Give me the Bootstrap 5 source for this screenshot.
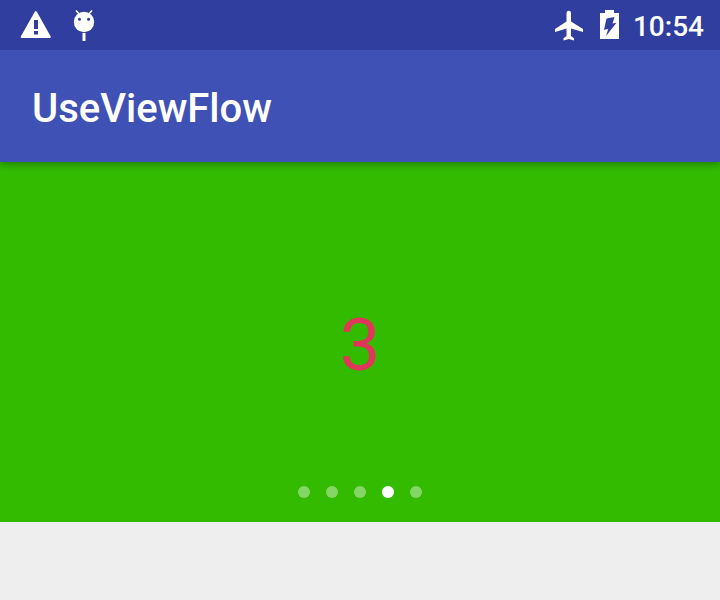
<!DOCTYPE html>
<html lang="en">
<head>
<meta charset="utf-8">
<meta name="viewport" content="width=device-width, initial-scale=1">
<title>UseViewFlow</title>
<link href="https://cdn.jsdelivr.net/npm/bootstrap@5.3.0/dist/css/bootstrap.min.css" rel="stylesheet">
<style>
body{font-family:Roboto,sans-serif;background:#eee;height:600px;overflow:hidden}
.status-bar{height:50px;background:#303f9f;padding:0 16px 0 20px;z-index:2}
.status-bar svg{display:block;fill:#fff}
.clock{font-size:28px;line-height:50px;font-weight:500;padding-top:4px;height:54px;margin-left:12px}
.battery{margin-left:12px}
.app-bar{height:112px;background:#3f51b5;padding:6px 32px 0;box-shadow:0 2px 8px rgba(0,0,0,.35);z-index:1}
.app-title{font-size:40px;font-weight:500;line-height:48px}
.pager{height:360px;background:#33bb00}
.page-number{font-size:72px;line-height:84px;color:#e0365a;padding-top:44px}
.dots{gap:16px;padding-bottom:24px}
.dot{width:12px;height:12px;background:rgba(255,255,255,.4)}
.dot.active{background:#fff}
</style>
</head>
<body>
<header class="status-bar position-relative d-flex align-items-center justify-content-between text-white">
  <div class="d-flex align-items-center">
    <svg width="32" height="50" viewBox="0 0 32 50"><path stroke="#fff" stroke-width="2" stroke-linejoin="round" d="M15.800 12 29.800 37H1.700z"/><path fill="#303f9f" d="M14 20h4v9h-4zM14 31h4v3.500h-4z"/></svg>
    <svg class="ms-3" width="32" height="50" viewBox="0 0 32 50"><circle cx="16" cy="22" r="10.200"/><path d="M14.500 33h3v8h-3z"/><path d="m8 10.500 4 4.500M24 10.500l-4 4.500" stroke="#fff" stroke-width="1.600"/><g fill="#303f9f"><circle cx="11.500" cy="19.300" r="1.500"/><circle cx="20.500" cy="19.300" r="1.500"/></g></svg>
  </div>
  <div class="d-flex align-items-center">
    <svg width="32" height="50" viewBox="0 0 32 50"><path d="M30 32v-3l-12-7.500v-8.500a2.200 2.200 0 0 0-4.500 0v8.500L2 29v3l11.500-3.500v7.500l-3 2.200v2.300l5.250-1.500L21 40.500v-2.300L18 36v-7.500z"/></svg>
    <svg class="battery" width="24" height="50" viewBox="0 0 24 50"><path d="M3 13h5v-3h9v3h5v26H3z"/><path fill="#303f9f" d="M9.500 18.500 17.500 17l-2 6.500 4-.7L9 36l2.200-7-4.200.8z"/></svg>
    <div class="clock">10:54</div>
  </div>
</header>
<nav class="app-bar position-relative d-flex align-items-center text-white"><h1 class="app-title m-0">UseViewFlow</h1></nav>
<main class="pager d-flex flex-column">
  <div class="flex-grow-1 d-flex align-items-center justify-content-center"><div class="page-number">3</div></div>
  <div class="dots d-flex justify-content-center"><span class="dot rounded-circle"></span><span class="dot rounded-circle"></span><span class="dot rounded-circle"></span><span class="dot rounded-circle active"></span><span class="dot rounded-circle"></span></div>
</main>
<script src="https://cdn.jsdelivr.net/npm/bootstrap@5.3.0/dist/js/bootstrap.bundle.min.js"></script>
</body>
</html>
